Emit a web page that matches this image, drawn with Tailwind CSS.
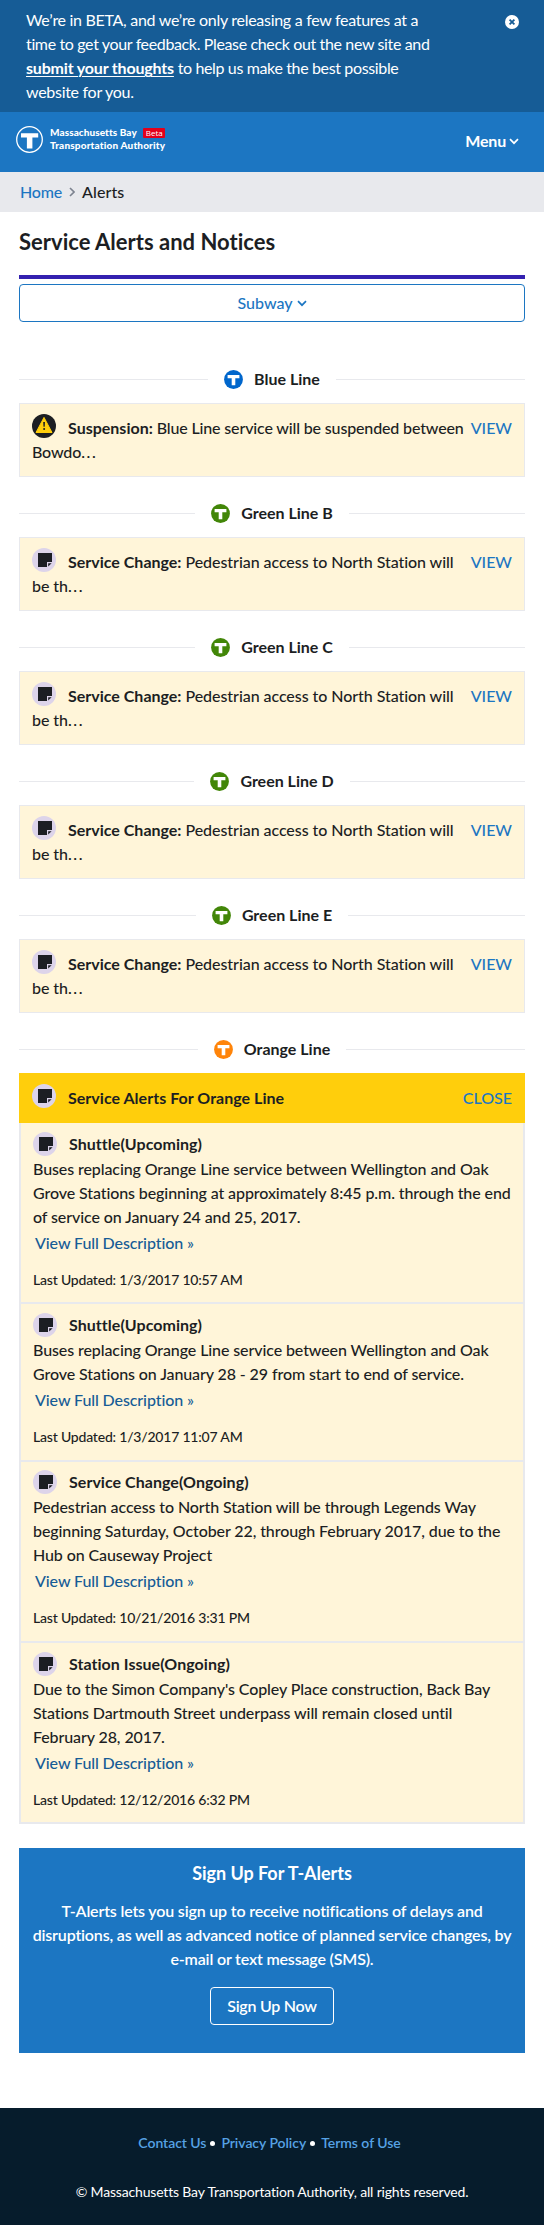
<!DOCTYPE html>
<html lang="en">
<head>
<meta charset="utf-8">
<title>Alerts | MBTA</title>
<script src="https://cdn.jsdelivr.net/npm/@tailwindcss/browser@4"></script>
</head>
<body class="bg-white font-[Lato,sans-serif] text-base leading-6 font-medium text-[#1c1e23]">
<svg class="hidden">
  <symbol id="t" viewBox="0 0 19 19"><circle cx="9.5" cy="9.5" r="9.4" fill="currentColor"/><path d="M3.6 5h11.8v3.3h-4.1v6.9H7.7V8.3H3.6z" fill="#fff"/></symbol>
  <symbol id="note" viewBox="0 0 24 24"><circle cx="12" cy="12" r="12" fill="#ddd4ea"/><path d="M6 5h14v9h-5v5H6z" fill="#1c1e23"/><path d="M16.2 18.6v-3.4h3.4z" fill="#1c1e23"/></symbol>
  <symbol id="warn" viewBox="0 0 24 24"><circle cx="12" cy="12" r="12" fill="#1c1e23"/><path d="M12 3.4 20 18.5H4z" fill="#ffce0c" stroke="#ffce0c" stroke-width="1" stroke-linejoin="round"/><path d="M11.2 8h1.8l-.3 4.8h-1.2z" fill="#1c1e23"/><circle cx="12.1" cy="15" r="1" fill="#1c1e23"/></symbol>
  <symbol id="down" viewBox="0 0 10 7"><path d="M1 1.2 5 5.2 9 1.2" fill="none" stroke="currentColor" stroke-width="1.7"/></symbol>
</svg>

<div class="flex h-28 justify-between bg-[#165c96] pt-2 pr-[25px] pl-[26px] text-white">
  <p class="font-normal whitespace-nowrap tracking-[-0.29px]">We’re in BETA, and we’re only releasing a few features at a<br><span class="tracking-[-0.36px]">time to get your feedback. Please check out the new site and</span><br><a class="font-bold tracking-[-0.18px] underline decoration-1 underline-offset-2">submit your thoughts</a><span class="tracking-[-0.36px]"> to help us make the best possible</span><br>website for you.</p>
  <svg class="mt-[7px] h-[14px] w-[14px]" viewBox="0 0 14 14"><circle cx="7" cy="7" r="7" fill="#fff"/><path d="M4.6 4.6 9.4 9.4M9.4 4.6 4.6 9.4" stroke="#165c96" stroke-width="1.8"/></svg>
</div>

<header class="flex h-[60px] items-start justify-between bg-[#1c76c2] pr-[25px] pl-4 text-white">
  <div class="flex pt-[14px]">
    <svg class="h-[27px] w-[27px]" viewBox="0 0 27 27"><circle cx="13.5" cy="13.5" r="12.8" fill="none" stroke="#fff" stroke-width="1.3"/><path d="M5 7.2h17.2v4.4h-5.8v11h-5.5v-11H5z" fill="#fff"/></svg>
    <div class="ml-[7px] text-[10px] leading-[12.5px] font-black whitespace-nowrap">
      <div class="flex items-center justify-between"><span class="tracking-[0.07px]">Massachusetts Bay</span><span class="mt-[1px] flex h-[10px] w-[22px] items-center justify-center rounded-[1px] bg-[#e3001b] font-['Open_Sans',sans-serif] text-[8px] font-normal">Beta</span></div>
      <div class="tracking-[0.17px]">Transportation Authority</div>
    </div>
  </div>
  <div class="flex items-center pt-[17px]"><span class="font-bold tracking-[-0.2px]">Menu</span><svg class="ml-[3px] h-[7px] w-[10px]"><use href="#down"/></svg></div>
</header>

<nav class="flex h-10 items-center bg-[#e8e9ed] pl-5">
  <a class="tracking-[-0.2px] text-[#1c76c2]">Home</a>
  <svg class="mr-[7px] ml-[7px] h-[10px] w-[6px]" viewBox="0 0 6 10"><path d="M1 1 5 5 1 9" fill="none" stroke="#7d8390" stroke-width="1.6"/></svg>
  <span class="tracking-[0.1px]">Alerts</span>
</nav>

<main class="px-[19px]">
  <h1 class="pt-4 text-[22px] leading-[27px] font-bold tracking-[0.01px] [font-variant-ligatures:none]">Service Alerts and Notices</h1>
  <div class="mt-5 h-1 bg-[#3421b0]"></div>
  <button class="mt-[5px] flex h-[38px] w-full items-center justify-center gap-1 rounded border border-[#1c76c2] text-[#1c76c2]">Subway<svg class="h-[7px] w-[10px]"><use href="#down"/></svg></button>
  <div id="lines" class="pt-[21px]"></div>

  <h2 class="mt-6 flex h-6 items-center"><i class="h-px flex-1 bg-[#e8e9ed]"></i><svg class="mt-[1px] ml-4 h-[19px] w-[19px] text-[#ff8409]"><use href="#t"/></svg><span class="mr-4 ml-[11px] font-bold">Orange Line</span><i class="h-px flex-1 bg-[#e8e9ed]"></i></h2>
  <div class="mt-3 flex h-[50px] bg-[#ffce0c] px-[13px] pt-[13px]">
    <svg class="-mt-[2px] mr-3 h-6 w-6"><use href="#note"/></svg>
    <span class="flex-1 font-bold tracking-[0.03px]">Service Alerts For Orange Line</span>
    <a class="text-[#1c76c2]">CLOSE</a>
  </div>
  <div id="items"></div>

  <section class="mt-6 flex h-[205px] flex-col items-center bg-[#1c76c2] pt-[14px] text-center text-white">
    <h3 class="text-[18px] leading-[22px] font-bold tracking-[-0.03px]">Sign Up For T-Alerts</h3>
    <p class="mt-[15px] font-semibold tracking-[-0.17px] whitespace-nowrap">T-Alerts lets you sign up to receive notifications of delays and<br>disruptions, as well as advanced notice of planned service changes, by<br>e-mail or text message (SMS).</p>
    <button class="mt-4 h-[38px] w-[124px] rounded border border-white font-semibold tracking-[-0.25px]">Sign Up Now</button>
  </section>
</main>

<footer class="mt-[55px] h-[117px] bg-[#061c2c] pt-6 text-center text-sm leading-[21px] text-white">
  <div class="-ml-[5px] flex justify-center font-semibold tracking-[-0.05px] text-[#56a2e4]">
    <a>Contact Us</a><span class="mr-[6px] ml-1 self-center text-white"><svg class="mt-[2px] h-[5px] w-[5px]" viewBox="0 0 5 5"><circle cx="2.5" cy="2.5" r="2.5" fill="#fff"/></svg></span>
    <a>Privacy Policy</a><span class="mr-[6px] ml-1 self-center text-white"><svg class="mt-[2px] h-[5px] w-[5px]" viewBox="0 0 5 5"><circle cx="2.5" cy="2.5" r="2.5" fill="#fff"/></svg></span>
    <a>Terms of Use</a>
  </div>
  <p class="mt-7 font-normal tracking-[-0.175px]">© Massachusetts Bay Transportation Authority, all rights reserved.</p>
</footer>

<script>
const blue = 'text-[#0066cc]', green = 'text-[#428608]';
const change = ['note', 'Service Change:', 'Pedestrian access to North Station will', 'be th', 'tracking-[-0.06px]'];
const lines = [
  ['Blue Line', blue, 'warn', 'Suspension:', 'Blue Line service will be suspended between', 'Bowdo', 'tracking-[-0.15px]'],
  ['Green Line B', green, ...change],
  ['Green Line C', green, ...change],
  ['Green Line D', green, ...change],
  ['Green Line E', green, ...change],
];
document.getElementById('lines').innerHTML = lines.map(([name, color, icon, label, text, rest, track]) => `
  <h2 class="mt-6 flex h-6 items-center"><i class="h-px flex-1 bg-[#e8e9ed]"></i><svg class="mt-[1px] ml-4 h-[19px] w-[19px] ${color}"><use href="#t"/></svg><span class="mr-4 ml-[11px] font-bold">${name}</span><i class="h-px flex-1 bg-[#e8e9ed]"></i></h2>
  <div class="mt-3 flex h-[74px] justify-between border border-[#e8e9ed] bg-[#fff5d9] p-3">
    <p class="whitespace-nowrap ${track}"><svg class="-mt-[2px] mr-3 inline-block h-6 w-6 align-top"><use href="#${icon}"/></svg><b class="font-bold tracking-normal">${label}</b> ${text}<br>${rest}<span class="tracking-[1.6px]">...</span></p>
    <a class="text-[#1c76c2]">VIEW</a>
  </div>`).join('');

const items = [
  ['Shuttle(Upcoming)', 'Buses replacing Orange Line service between Wellington and Oak<br>Grove Stations beginning at approximately 8:45 p.m. through the end<br>of service on January 24 and 25, 2017.', '1/3/2017 10:57 AM'],
  ['Shuttle(Upcoming)', 'Buses replacing Orange Line service between Wellington and Oak<br>Grove Stations on January 28 - 29 from start to end of service.', '1/3/2017 11:07 AM'],
  ['Service Change(Ongoing)', 'Pedestrian access to North Station will be through Legends Way<br>beginning Saturday, October 22, through February 2017, due to the<br>Hub on Causeway Project', '10/21/2016 3:31 PM'],
  ['Station Issue(Ongoing)', 'Due to the Simon Company\'s Copley Place construction, Back Bay<br>Stations Dartmouth Street underpass will remain closed until<br>February 28, 2017.', '12/12/2016 6:32 PM'],
];
document.getElementById('items').innerHTML = items.map(([title, text, date]) => `
  <article class="border-x-2 border-b-2 border-[#e8e9ed] bg-[#fff5d9] px-3 pt-[8.75px] pb-[12.5px]">
    <h3 class="flex h-[25px] leading-[23.5px] font-bold tracking-[0.04px]"><svg class="mr-3 h-6 w-6"><use href="#note"/></svg>${title}</h3>
    <p class="whitespace-nowrap tracking-[-0.1px]">${text}</p>
    <a class="mt-[2px] ml-[2px] block tracking-[-0.1px] text-[#165c96]">View Full Description »</a>
    <p class="mt-[14px] text-sm leading-[21px] tracking-[-0.2px]">Last Updated: ${date}</p>
  </article>`).join('');
</script>
</body>
</html>
